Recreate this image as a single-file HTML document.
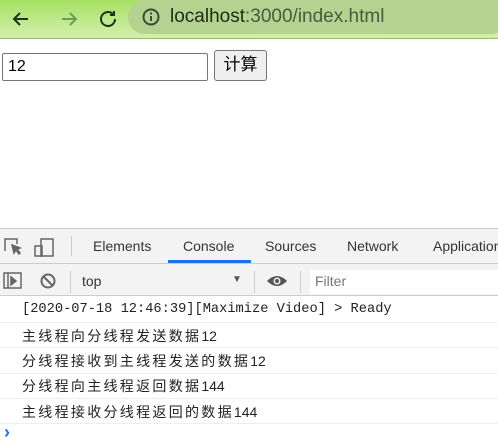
<!DOCTYPE html>
<html><head><meta charset="utf-8"><style>
*{margin:0;padding:0;box-sizing:border-box}
body{width:498px;height:447px;overflow:hidden;background:#fff;font-family:"Liberation Sans","Noto Sans CJK SC",sans-serif;position:relative}
.bar{position:absolute;left:0;top:0;width:498px;height:39px;background:linear-gradient(#a6e062,#c6ec98 70%,#d2f0a8);border-bottom:1px solid #98b878}
.pill{position:absolute;left:128px;top:0;width:380px;height:34px;border-radius:17px;background:#b6d290}
.url{position:absolute;left:170px;top:6px;font-size:19px;color:#1e2a18}
.url span{color:#4a5a40}
.abs{position:absolute}
input{position:absolute;left:2px;top:53px;width:206px;height:28px;border:1px solid #767676;border-radius:2px;font:16px "Liberation Sans",sans-serif;padding-left:5px;color:#000}
.btn{position:absolute;left:214px;top:50px;width:53px;height:31px;border:1px solid #767676;border-radius:3px;background:#efefef;font-size:17px;text-align:center;line-height:28px}
.dt{position:absolute;left:0;top:228px;width:498px;height:67px;background:#f3f3f3;border-top:1px solid #ccc}
.tabs{position:absolute;top:9px;font-size:14px;color:#333}
.sep{position:absolute;left:0;top:34px;width:498px;height:1px;background:#ccc}
.line{position:absolute;left:0;width:498px;height:1px;background:#eee}
.log{position:absolute;left:22px;font:13.7px "Liberation Mono","Noto Sans CJK SC",monospace;color:#222;white-space:nowrap}
.cj{font-size:14px;letter-spacing:2.3px}
.cj b{font-weight:normal;letter-spacing:0;font-family:"Liberation Sans",sans-serif;font-size:14px}
</style></head><body>
<div class="bar"><div class="pill"></div>
<svg class="abs" style="left:10px;top:6px" width="110" height="24" viewBox="0 0 110 24" fill="none" stroke-width="2">
<path d="M18 13H4M10 7L4 13l6 6" stroke="#1f3320"/>
<path d="M52 13H66M60 7l6 6-6 6" stroke="#6e9b58"/>
<path d="M105 13a7 7 0 1 1-2.2-5.1" stroke="#1f3320"/><path d="M104 5v4h-4" stroke="#1f3320"/>
</svg>
<svg class="abs" style="left:141px;top:7px" width="20" height="20" viewBox="0 0 20 20"><circle cx="10" cy="10" r="7.5" fill="none" stroke="#3b4a33" stroke-width="2"/><rect x="9" y="9" width="2" height="5" fill="#3b4a33"/><rect x="9" y="5.5" width="2" height="2" fill="#3b4a33"/></svg>
<div class="url">localhost<span>:3000/index.html</span></div>
</div>
<input value="12">
<div class="btn">计算</div>
<div class="dt">
<svg class="abs" style="left:4px;top:8px" width="52" height="20" viewBox="0 0 52 20" fill="none" stroke="#666" stroke-width="1.5"><path d="M1 14V2h12v5"/><path d="M8 8l8 3-3 1 3 4-1 1-3-4-2 3z" fill="#666"/><rect x="37" y="2" width="12" height="17"/><rect x="31" y="9" width="7" height="10"/></svg>
<div class="abs" style="left:71px;top:7px;width:1px;height:20px;background:#ccc"></div>
<div class="tabs" style="left:93px">Elements</div>
<div class="tabs" style="left:183px">Console</div>
<div class="tabs" style="left:265px">Sources</div>
<div class="tabs" style="left:347px">Network</div>
<div class="tabs" style="left:433px">Application</div>
<div class="abs" style="left:168px;top:31px;width:83px;height:3px;background:#1a73e8"></div>
<div class="sep"></div>
<svg class="abs" style="left:2px;top:42px" width="60" height="20" viewBox="0 0 60 20" fill="none" stroke="#666" stroke-width="1.5"><rect x="2" y="2" width="17" height="15"/><path d="M6 2v15"/><path d="M9 6l5 4-5 4z" fill="#666"/><circle cx="46" cy="10" r="6.5" stroke-width="2"/><path d="M41.5 5.5l9 9" stroke-width="2"/></svg>
<div class="abs" style="left:70px;top:42px;width:1px;height:22px;background:#ccc"></div>
<div class="abs" style="left:82px;top:44px;font-size:14px;color:#333">top</div>
<div class="abs" style="left:232px;top:45px;font-size:10px;color:#555">▼</div>
<div class="abs" style="left:254px;top:42px;width:1px;height:22px;background:#ccc"></div>
<svg class="abs" style="left:266px;top:44px" width="22" height="16" viewBox="0 0 22 16"><path d="M1 8Q11-2 21 8Q11 18 1 8z" fill="#555"/><circle cx="11" cy="8" r="3.5" fill="#f3f3f3"/><circle cx="11" cy="8" r="2" fill="#555"/></svg>
<div class="abs" style="left:300px;top:42px;width:1px;height:22px;background:#ccc"></div>
<div class="abs" style="left:310px;top:41px;width:188px;height:24px;background:#fff"></div>
<div class="abs" style="left:315px;top:44px;font-size:14px;color:#777">Filter</div>
</div>
<div class="line" style="top:295px;background:#ccc"></div>
<div class="log" style="top:302px">[2020-07-18 12:46:39][Maximize Video] &gt; Ready</div>
<div class="line" style="top:322px"></div>
<div class="log cj" style="top:326px">主线程向分线程发送数据<b>12</b></div>
<div class="line" style="top:347px"></div>
<div class="log cj" style="top:351px">分线程接收到主线程发送的数据<b>12</b></div>
<div class="line" style="top:373px"></div>
<div class="log cj" style="top:376px">分线程向主线程返回数据<b>144</b></div>
<div class="line" style="top:398px"></div>
<div class="log cj" style="top:402px">主线程接收分线程返回的数据<b>144</b></div>
<div class="line" style="top:423px"></div>
<div class="abs" style="left:4px;top:422px;color:#1a73e8;font-size:18px;font-weight:bold">›</div>
</body></html>
